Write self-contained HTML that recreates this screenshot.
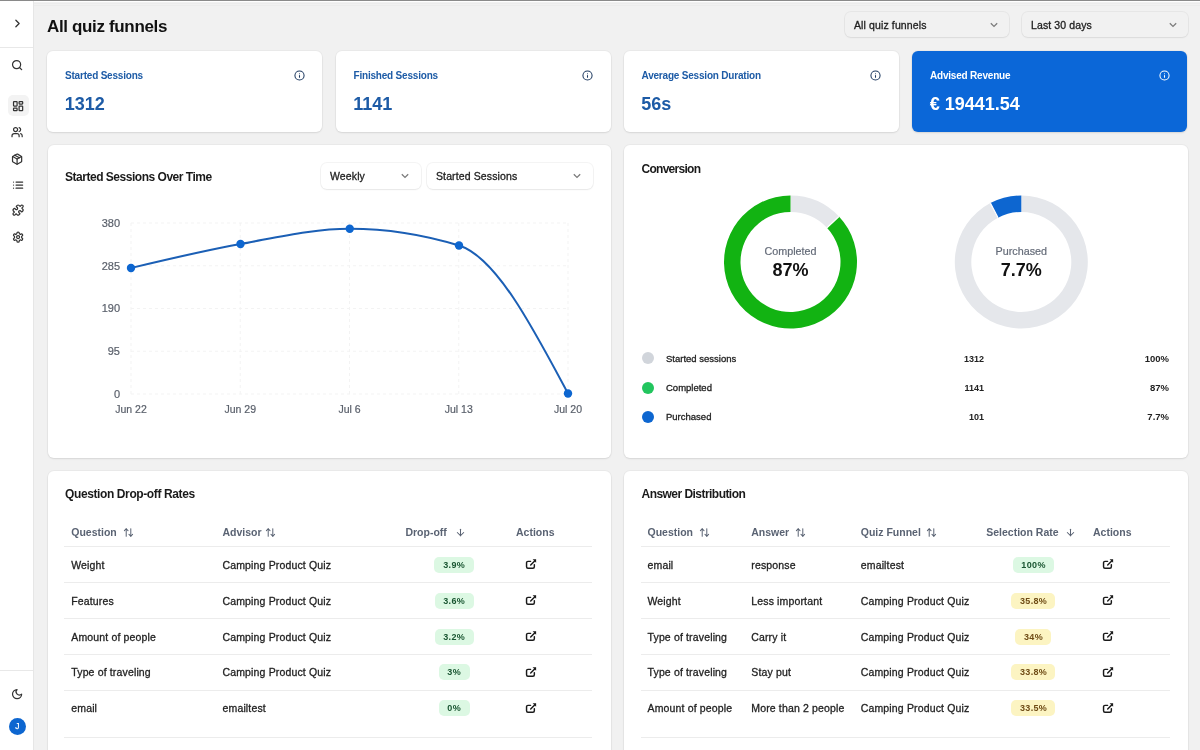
<!DOCTYPE html><html><head><meta charset="utf-8"><style>
*{box-sizing:border-box;margin:0;padding:0}
html,body{width:1200px;height:750px;overflow:hidden}
body{background:#f1f1f1;font-family:"Liberation Sans",sans-serif;color:#1a1a1a;position:relative}
.a{position:absolute;white-space:nowrap}
.card{position:absolute;background:#fff;border-radius:6px;box-shadow:0 1px 2px rgba(0,0,0,.09),0 0 0 1px rgba(0,0,0,.03)}
.md{-webkit-text-stroke:0.25px currentColor}
.ttl{font-size:12px;font-weight:bold;color:#1a1a1a;letter-spacing:-0.3px}
.sel{position:absolute;background:#fff;border-radius:6px;box-shadow:0 1px 2px rgba(0,0,0,.06),0 0 0 1px rgba(0,0,0,.045);font-size:10.5px;letter-spacing:0.12px;color:#222;-webkit-text-stroke:0.3px #222}
.sel span{position:absolute;left:9px;top:7px;white-space:nowrap}
.sel svg{position:absolute;right:11.5px;top:10px}
.ico{position:absolute;fill:none;stroke-linecap:round;stroke-linejoin:round}
.th{font-size:10.5px;font-weight:bold;color:#5a6373}
.td{font-size:10.5px;letter-spacing:0.15px;color:#1f1f1f;-webkit-text-stroke:0.3px #1f1f1f}
.bdg{position:absolute;height:16px;border-radius:5px;font-size:9px;font-weight:bold;text-align:center;line-height:16px;white-space:nowrap;letter-spacing:0.35px;text-indent:0.35px}
.g{background:#dcf8e3;color:#1a5632}
.y{background:#fcf4c2;color:#6f4c16}
.hl{position:absolute;height:1px;background:#ececec}
</style></head><body><div id="root" style="position:absolute;left:0;top:0;width:1200px;height:750px;will-change:transform">
<div class="a" style="left:0;top:0;width:1200px;height:1px;background:#8a8a8a"></div>
<div class="a" style="left:34px;top:1px;width:1166px;height:1px;background:#fff"></div>
<div class="a" style="left:34px;top:3px;width:1166px;height:1px;background:#ececec"></div>
<div class="a" style="left:34px;top:5px;width:1166px;height:1px;background:#ececec"></div>
<div class="a" style="left:0;top:1px;width:34px;height:749px;background:#fff;border-right:1px solid #e6e6e6"></div>
<div class="a" style="left:0;top:47px;width:33px;height:1px;background:#e8e8e8"></div>
<div class="a" style="left:0;top:670px;width:33px;height:1px;background:#e8e8e8"></div>
<div class="a" style="left:7.5px;top:95px;width:21px;height:21px;border-radius:5px;background:#f3f3f3"></div>
<svg class="ico" style="left:11.0px;top:16.7px" width="13" height="13" viewBox="0 0 24 24" stroke="#333" stroke-width="2.4"><path d="m9 18 6-6-6-6"/></svg>
<svg class="ico" style="left:10.700000000000001px;top:58.699999999999996px" width="12.2" height="12.2" viewBox="0 0 24 24" stroke="#333" stroke-width="2.4"><circle cx="11" cy="11" r="8"/><path d="m21 21-4.3-4.3"/></svg>
<svg class="ico" style="left:11.500000000000002px;top:99.7px" width="12.2" height="12.2" viewBox="0 0 24 24" stroke="#333" stroke-width="2.4"><rect width="7" height="9" x="3" y="3" rx="1"/><rect width="7" height="5" x="14" y="3" rx="1"/><rect width="7" height="9" x="14" y="12" rx="1"/><rect width="7" height="5" x="3" y="16" rx="1"/></svg>
<svg class="ico" style="left:11.4px;top:125.9px" width="12.2" height="12.2" viewBox="0 0 24 24" stroke="#333" stroke-width="2.4"><path d="M16 21v-2a4 4 0 0 0-4-4H6a4 4 0 0 0-4 4v2"/><circle cx="9" cy="7" r="4"/><path d="M22 21v-2a4 4 0 0 0-3-3.87"/><path d="M16 3.13a4 4 0 0 1 0 7.75"/></svg>
<svg class="ico" style="left:11.299999999999999px;top:152.5px" width="12.2" height="12.2" viewBox="0 0 24 24" stroke="#333" stroke-width="2.4"><path d="m7.5 4.27 9 5.15"/><path d="M21 8a2 2 0 0 0-1-1.73l-7-4a2 2 0 0 0-2 0l-7 4A2 2 0 0 0 3 8v8a2 2 0 0 0 1 1.730l7 4a2 2 0 0 0 2 0l7-4A2 2 0 0 0 21 16Z"/><path d="m3.3 7 8.7 5 8.7-5"/><path d="M12 22V12"/></svg>
<svg class="ico" style="left:11.9px;top:178.70000000000002px" width="12.2" height="12.2" viewBox="0 0 24 24" stroke="#333" stroke-width="2.4"><path d="M8 6h13M8 12h13M8 18h13M3 6h.01M3 12h.01M3 18h.01"/></svg>
<svg class="ico" style="left:11.500000000000002px;top:204.4px" width="12.2" height="12.2" viewBox="0 0 24 24" stroke="#333" stroke-width="2.4"><path d="M19.439 7.85c-.049.322.059.648.289.878l1.568 1.568c.47.47.706 1.087.706 1.704s-.235 1.233-.706 1.704l-1.611 1.611a.98.98 0 0 1-.837.276c-.47-.07-.802-.48-.968-.925a2.501 2.501 0 1 0-3.214 3.214c.446.166.855.497.925.968a.979.979 0 0 1-.276.837l-1.61 1.61a2.404 2.404 0 0 1-1.705.707 2.402 2.402 0 0 1-1.704-.706l-1.568-1.568a1.026 1.026 0 0 0-.877-.29c-.493.074-.84.504-1.02.968a2.5 2.5 0 1 1-3.237-3.237c.464-.18.894-.527.967-1.020a1.026 1.026 0 0 0-.289-.877l-1.568-1.568A2.402 2.402 0 0 1 1.998 12c0-.617.236-1.234.706-1.704L4.23 8.77c.24-.24.581-.353.917-.303.515.077.877.528 1.073 1.01a2.5 2.5 0 1 0 3.259-3.259c-.482-.196-.933-.558-1.010-1.073-.05-.336.062-.676.303-.917l1.525-1.525A2.402 2.402 0 0 1 12 1.998c.617 0 1.234.236 1.704.706l1.568 1.568c.23.23.556.338.877.29.493-.074.84-.504 1.020-.968a2.5 2.5 0 1 1 3.237 3.237c-.464.18-.894.527-.967 1.020Z"/></svg>
<svg class="ico" style="left:11.500000000000002px;top:230.9px" width="12.2" height="12.2" viewBox="0 0 24 24" stroke="#333" stroke-width="2.4"><path d="M12.22 2h-.44a2 2 0 0 0-2 2v.18a2 2 0 0 1-1 1.73l-.43.25a2 2 0 0 1-2 0l-.15-.08a2 2 0 0 0-2.73.73l-.22.38a2 2 0 0 0 .73 2.73l.15.1a2 2 0 0 1 1 1.72v.51a2 2 0 0 1-1 1.74l-.15.09a2 2 0 0 0-.73 2.73l.22.38a2 2 0 0 0 2.73.73l.15-.08a2 2 0 0 1 2 0l.43.25a2 2 0 0 1 1 1.73V20a2 2 0 0 0 2 2h.44a2 2 0 0 0 2-2v-.18a2 2 0 0 1 1-1.73l.43-.25a2 2 0 0 1 2 0l.15.08a2 2 0 0 0 2.730-.73l.22-.39a2 2 0 0 0-.73-2.73l-.15-.08a2 2 0 0 1-1-1.740v-.5a2 2 0 0 1 1-1.74l.15-.09a2 2 0 0 0 .73-2.73l-.22-.38a2 2 0 0 0-2.73-.73l-.15.08a2 2 0 0 1-2 0l-.43-.25a2 2 0 0 1-1-1.73V4a2 2 0 0 0-2-2z"/><circle cx="12" cy="12" r="3"/></svg>
<svg class="ico" style="left:11.1px;top:688.4px" width="12.2" height="12.2" viewBox="0 0 24 24" stroke="#333" stroke-width="2.4"><path d="M12 3a6 6 0 0 0 9 9 9 9 0 1 1-9-9Z"/></svg>
<div class="a" style="left:8.6px;top:717.5px;width:17.4px;height:17.4px;border-radius:50%;background:#0d66d0;color:#fff;font-size:8.5px;-webkit-text-stroke:0.25px #fff;text-align:center;line-height:17.4px">J</div>
<div class="a" style="left:47px;top:16.5px;font-size:17px;font-weight:bold;color:#111;letter-spacing:-0.35px">All quiz funnels</div>
<div class="sel" style="left:845px;top:12px;width:164px;height:25px;background:#f1f1f1"><span>All quiz funnels</span><svg width="8" height="6" viewBox="0 0 8 6"><path d="M0.8 1.2l3.2 3.2 3.2-3.2" fill="none" stroke="#7c7c7c" stroke-width="1.3"/></svg></div>
<div class="sel" style="left:1022px;top:12px;width:166px;height:25px;background:#f1f1f1"><span>Last 30 days</span><svg width="8" height="6" viewBox="0 0 8 6"><path d="M0.8 1.2l3.2 3.2 3.2-3.2" fill="none" stroke="#7c7c7c" stroke-width="1.3"/></svg></div>
<div class="card" style="left:47px;top:50.7px;width:275.3px;height:81.8px;background:#fff"><div class="a" style="left:18px;top:19.5px;font-size:10px;font-weight:bold;letter-spacing:-0.2px;color:#1d5ba6">Started Sessions</div><div class="a" style="left:17.7px;top:43.5px;font-size:18px;font-weight:bold;color:#1d5ba6">1312</div></div>
<svg class="ico" style="left:293.8px;top:69.8px" width="11" height="11" viewBox="0 0 24 24" stroke="#1e3a60" stroke-width="2.3"><circle cx="12" cy="12" r="10"/><path d="M12 16v-4M12 8h.01"/></svg>
<div class="card" style="left:335.5px;top:50.7px;width:275.3px;height:81.8px;background:#fff"><div class="a" style="left:18px;top:19.5px;font-size:10px;font-weight:bold;letter-spacing:-0.2px;color:#1d5ba6">Finished Sessions</div><div class="a" style="left:17.7px;top:43.5px;font-size:18px;font-weight:bold;color:#1d5ba6">1141</div></div>
<svg class="ico" style="left:582.3px;top:69.8px" width="11" height="11" viewBox="0 0 24 24" stroke="#1e3a60" stroke-width="2.3"><circle cx="12" cy="12" r="10"/><path d="M12 16v-4M12 8h.01"/></svg>
<div class="card" style="left:623.5px;top:50.7px;width:275.3px;height:81.8px;background:#fff"><div class="a" style="left:18px;top:19.5px;font-size:10px;font-weight:bold;letter-spacing:-0.2px;color:#1d5ba6">Average Session Duration</div><div class="a" style="left:17.7px;top:43.5px;font-size:18px;font-weight:bold;color:#1d5ba6">56s</div></div>
<svg class="ico" style="left:870.3px;top:69.8px" width="11" height="11" viewBox="0 0 24 24" stroke="#1e3a60" stroke-width="2.3"><circle cx="12" cy="12" r="10"/><path d="M12 16v-4M12 8h.01"/></svg>
<div class="card" style="left:912px;top:50.7px;width:275.3px;height:81.8px;background:#0b67d8"><div class="a" style="left:18px;top:19.5px;font-size:10px;font-weight:bold;letter-spacing:-0.2px;color:#fff">Advised Revenue</div><div class="a" style="left:17.7px;top:43.5px;font-size:18px;font-weight:bold;color:#fff">€ 19441.54</div></div>
<svg class="ico" style="left:1158.8px;top:69.8px" width="11" height="11" viewBox="0 0 24 24" stroke="#fff" stroke-width="2.3"><circle cx="12" cy="12" r="10"/><path d="M12 16v-4M12 8h.01"/></svg>
<div class="card" style="left:47.5px;top:145px;width:563.5px;height:312.5px"></div>
<div class="a" style="left:65px;top:169.5px;letter-spacing:-0.48px;font-size:12px;font-weight:bold;color:#1a1a1a">Started Sessions Over Time</div>
<div class="sel" style="left:321px;top:163px;width:99.5px;height:26px"><span>Weekly</span><svg width="8" height="6" viewBox="0 0 8 6"><path d="M0.8 1.2l3.2 3.2 3.2-3.2" fill="none" stroke="#7c7c7c" stroke-width="1.3"/></svg></div>
<div class="sel" style="left:427px;top:163px;width:165.5px;height:26px"><span>Started Sessions</span><svg width="8" height="6" viewBox="0 0 8 6"><path d="M0.8 1.2l3.2 3.2 3.2-3.2" fill="none" stroke="#7c7c7c" stroke-width="1.3"/></svg></div>
<div class="card" style="left:623.5px;top:145px;width:564px;height:312.5px"></div>
<svg class="a" style="left:0;top:0" width="1200" height="750" viewBox="0 0 1200 750">
<line x1="131" x2="568" y1="223" y2="223" stroke="#f3f3f3" stroke-width="1" stroke-dasharray="3 3"/>
<line x1="131" x2="568" y1="265.75" y2="265.75" stroke="#f3f3f3" stroke-width="1" stroke-dasharray="3 3"/>
<line x1="131" x2="568" y1="308.5" y2="308.5" stroke="#f3f3f3" stroke-width="1" stroke-dasharray="3 3"/>
<line x1="131" x2="568" y1="351.25" y2="351.25" stroke="#f3f3f3" stroke-width="1" stroke-dasharray="3 3"/>
<line x1="131" x2="568" y1="394" y2="394" stroke="#f3f3f3" stroke-width="1" stroke-dasharray="3 3"/>
<line x1="131" x2="131" y1="223" y2="394" stroke="#f3f3f3" stroke-width="1" stroke-dasharray="3 3"/>
<line x1="240.25" x2="240.25" y1="223" y2="394" stroke="#f3f3f3" stroke-width="1" stroke-dasharray="3 3"/>
<line x1="349.5" x2="349.5" y1="223" y2="394" stroke="#f3f3f3" stroke-width="1" stroke-dasharray="3 3"/>
<line x1="458.75" x2="458.75" y1="223" y2="394" stroke="#f3f3f3" stroke-width="1" stroke-dasharray="3 3"/>
<line x1="568" x2="568" y1="223" y2="394" stroke="#f3f3f3" stroke-width="1" stroke-dasharray="3 3"/>
<text x="120" y="226.8" text-anchor="end" font-size="11" fill="#595f6a" stroke="#595f6a" stroke-width="0.2" font-family="Liberation Sans">380</text>
<text x="120" y="269.55" text-anchor="end" font-size="11" fill="#595f6a" stroke="#595f6a" stroke-width="0.2" font-family="Liberation Sans">285</text>
<text x="120" y="312.3" text-anchor="end" font-size="11" fill="#595f6a" stroke="#595f6a" stroke-width="0.2" font-family="Liberation Sans">190</text>
<text x="120" y="355.05" text-anchor="end" font-size="11" fill="#595f6a" stroke="#595f6a" stroke-width="0.2" font-family="Liberation Sans">95</text>
<text x="120" y="397.8" text-anchor="end" font-size="11" fill="#595f6a" stroke="#595f6a" stroke-width="0.2" font-family="Liberation Sans">0</text>
<text x="131" y="413" text-anchor="middle" font-size="10.5" fill="#595f6a" stroke="#595f6a" stroke-width="0.2" font-family="Liberation Sans">Jun 22</text>
<text x="240.25" y="413" text-anchor="middle" font-size="10.5" fill="#595f6a" stroke="#595f6a" stroke-width="0.2" font-family="Liberation Sans">Jun 29</text>
<text x="349.5" y="413" text-anchor="middle" font-size="10.5" fill="#595f6a" stroke="#595f6a" stroke-width="0.2" font-family="Liberation Sans">Jul 6</text>
<text x="458.75" y="413" text-anchor="middle" font-size="10.5" fill="#595f6a" stroke="#595f6a" stroke-width="0.2" font-family="Liberation Sans">Jul 13</text>
<text x="568" y="413" text-anchor="middle" font-size="10.5" fill="#595f6a" stroke="#595f6a" stroke-width="0.2" font-family="Liberation Sans">Jul 20</text>
<path d="M131.00,268.00 C167.50,259.28 204.00,250.55 240.50,244.00 C276.92,237.46 313.33,228.70 349.75,228.70 C386.17,228.70 422.58,234.30 459.00,245.50 C495.33,256.67 531.67,325.09 568.00,393.50" fill="none" stroke="#1b5fb5" stroke-width="2"/>
<circle cx="131" cy="268" r="4.2" fill="#0d66d0"/>
<circle cx="240.5" cy="244" r="4.2" fill="#0d66d0"/>
<circle cx="349.75" cy="228.7" r="4.2" fill="#0d66d0"/>
<circle cx="459" cy="245.5" r="4.2" fill="#0d66d0"/>
<circle cx="568" cy="393.5" r="4.2" fill="#0d66d0"/>
<path d="M790.50,195.50 A66.5,66.5 0 0 1 838.98,216.48 L826.95,227.77 A50,50 0 0 0 790.50,212.00Z" fill="#e5e7eb"/>
<path d="M838.98,216.48 A66.5,66.5 0 1 1 790.50,195.50 L790.50,212.00 A50,50 0 1 0 826.95,227.77Z" fill="#12b312"/>
<line x1="826.95" y1="227.77" x2="838.98" y2="216.48" stroke="#fff" stroke-width="1.2"/>
<path d="M1021.30,195.50 A66.5,66.5 0 1 1 990.39,203.12 L998.06,217.73 A50,50 0 1 0 1021.30,212.00Z" fill="#e5e7eb"/>
<path d="M990.39,203.12 A66.5,66.5 0 0 1 1021.30,195.50 L1021.30,212.00 A50,50 0 0 0 998.06,217.73Z" fill="#0d66d0"/>
<line x1="998.06" y1="217.73" x2="990.39" y2="203.12" stroke="#fff" stroke-width="1.2"/>
</svg>
<div class="a" style="left:641.5px;top:162px;letter-spacing:-0.72px;font-size:12px;font-weight:bold;color:#1a1a1a">Conversion</div>
<div class="a" style="left:740.5px;top:244.5px;width:100px;text-align:center;font-size:10.75px;color:#646b78;-webkit-text-stroke:0.2px #646b78">Completed</div>
<div class="a" style="left:740.5px;top:260px;width:100px;text-align:center;font-size:18px;font-weight:bold;color:#111">87%</div>
<div class="a" style="left:971.3px;top:244.5px;width:100px;text-align:center;font-size:10.75px;color:#646b78;-webkit-text-stroke:0.2px #646b78">Purchased</div>
<div class="a" style="left:971.3px;top:260px;width:100px;text-align:center;font-size:18px;font-weight:bold;color:#111">7.7%</div>
<div class="a" style="left:642.25px;top:352.25px;width:12px;height:12px;border-radius:50%;background:#d1d5db"></div>
<div class="a" style="left:666px;top:352.55px;font-size:9.5px;color:#222;-webkit-text-stroke:0.3px #222;line-height:12px">Started sessions</div>
<div class="a" style="left:884px;top:352.85px;width:100px;text-align:right;font-size:9px;font-weight:bold;color:#222;line-height:12px">1312</div>
<div class="a" style="left:1069px;top:352.85px;width:100px;text-align:right;font-size:9.5px;font-weight:bold;color:#222;line-height:12px">100%</div>
<div class="a" style="left:642.25px;top:381.5px;width:12px;height:12px;border-radius:50%;background:#22c55e"></div>
<div class="a" style="left:666px;top:381.8px;font-size:9.5px;color:#222;-webkit-text-stroke:0.3px #222;line-height:12px">Completed</div>
<div class="a" style="left:884px;top:382.1px;width:100px;text-align:right;font-size:9px;font-weight:bold;color:#222;line-height:12px">1141</div>
<div class="a" style="left:1069px;top:382.1px;width:100px;text-align:right;font-size:9.5px;font-weight:bold;color:#222;line-height:12px">87%</div>
<div class="a" style="left:642.25px;top:410.75px;width:12px;height:12px;border-radius:50%;background:#0d66d0"></div>
<div class="a" style="left:666px;top:411.05px;font-size:9.5px;color:#222;-webkit-text-stroke:0.3px #222;line-height:12px">Purchased</div>
<div class="a" style="left:884px;top:411.35px;width:100px;text-align:right;font-size:9px;font-weight:bold;color:#222;line-height:12px">101</div>
<div class="a" style="left:1069px;top:411.35px;width:100px;text-align:right;font-size:9.5px;font-weight:bold;color:#222;line-height:12px">7.7%</div>
<div class="card" style="left:47.5px;top:470.5px;width:563.5px;height:300px"></div>
<div class="card" style="left:623.5px;top:470.5px;width:564px;height:300px"></div>
<div class="a" style="left:65px;top:487px;letter-spacing:-0.39px;font-size:12px;font-weight:bold;color:#1a1a1a">Question Drop-off Rates</div>
<div class="a" style="left:641.5px;top:487px;letter-spacing:-0.54px;font-size:12px;font-weight:bold;color:#1a1a1a">Answer Distribution</div>
<div class="hl" style="left:64.25px;top:546.0px;width:528px"></div>
<div class="hl" style="left:640.75px;top:546.0px;width:529px"></div>
<div class="hl" style="left:64.25px;top:582.0px;width:528px"></div>
<div class="hl" style="left:640.75px;top:582.0px;width:529px"></div>
<div class="hl" style="left:64.25px;top:617.75px;width:528px"></div>
<div class="hl" style="left:640.75px;top:617.75px;width:529px"></div>
<div class="hl" style="left:64.25px;top:654.0px;width:528px"></div>
<div class="hl" style="left:640.75px;top:654.0px;width:529px"></div>
<div class="hl" style="left:64.25px;top:689.5px;width:528px"></div>
<div class="hl" style="left:640.75px;top:689.5px;width:529px"></div>
<div class="hl" style="left:64.25px;top:737.0px;width:528px"></div>
<div class="hl" style="left:640.75px;top:737.0px;width:529px"></div>
<div class="a th" style="left:71.25px;top:525.5px;line-height:12px">Question</div>
<svg class="ico" style="left:122.5px;top:526.5px" width="11" height="11" viewBox="0 0 24 24" stroke="#5a6373" stroke-width="2.2"><path d="m21 16-4 4-4-4"/><path d="M17 20V4"/><path d="m3 8 4-4 4 4"/><path d="M7 4v16"/></svg>
<div class="a th" style="left:222.5px;top:525.5px;line-height:12px">Advisor</div>
<svg class="ico" style="left:264.5px;top:526.5px" width="11" height="11" viewBox="0 0 24 24" stroke="#5a6373" stroke-width="2.2"><path d="m21 16-4 4-4-4"/><path d="M17 20V4"/><path d="m3 8 4-4 4 4"/><path d="M7 4v16"/></svg>
<div class="a th" style="left:405.4px;top:525.5px;line-height:12px">Drop-off</div>
<svg class="ico" style="left:454.5px;top:526.5px" width="11" height="11" viewBox="0 0 24 24" stroke="#5a6373" stroke-width="2.2"><path d="M12 5v14"/><path d="m19 12-7 7-7-7"/></svg>
<div class="a th" style="left:516px;top:525.5px;line-height:12px">Actions</div>
<div class="a td" style="left:71.25px;top:558.8px;line-height:12px">Weight</div>
<div class="a td" style="left:222.5px;top:558.8px;line-height:12px">Camping Product Quiz</div>
<div class="bdg g" style="left:434.0px;top:556.8px;width:40px">3.9%</div>
<svg class="ico" style="left:524.5px;top:558.4px" width="12" height="12" viewBox="0 0 12 12" stroke="#1a1a1a" stroke-width="1.45"><path d="M5.6 3.35H3a1.45 1.45 0 0 0-1.45 1.45v4a1.45 1.45 0 0 0 1.45 1.45h4.9a1.45 1.45 0 0 0 1.45-1.45V6.6" fill="none"/><path d="M5.7 6.9L10.2 2.4"/><path d="M7.6 1.2H11.1V4.7Z" fill="#1a1a1a" stroke="none"/></svg>
<div class="a td" style="left:71.25px;top:594.5px;line-height:12px">Features</div>
<div class="a td" style="left:222.5px;top:594.5px;line-height:12px">Camping Product Quiz</div>
<div class="bdg g" style="left:434.5px;top:592.5px;width:39px">3.6%</div>
<svg class="ico" style="left:524.5px;top:594.1px" width="12" height="12" viewBox="0 0 12 12" stroke="#1a1a1a" stroke-width="1.45"><path d="M5.6 3.35H3a1.45 1.45 0 0 0-1.45 1.45v4a1.45 1.45 0 0 0 1.45 1.45h4.9a1.45 1.45 0 0 0 1.45-1.45V6.6" fill="none"/><path d="M5.7 6.9L10.2 2.4"/><path d="M7.6 1.2H11.1V4.7Z" fill="#1a1a1a" stroke="none"/></svg>
<div class="a td" style="left:71.25px;top:630.5px;line-height:12px">Amount of people</div>
<div class="a td" style="left:222.5px;top:630.5px;line-height:12px">Camping Product Quiz</div>
<div class="bdg g" style="left:434.5px;top:628.5px;width:39px">3.2%</div>
<svg class="ico" style="left:524.5px;top:630.1px" width="12" height="12" viewBox="0 0 12 12" stroke="#1a1a1a" stroke-width="1.45"><path d="M5.6 3.35H3a1.45 1.45 0 0 0-1.45 1.45v4a1.45 1.45 0 0 0 1.45 1.45h4.9a1.45 1.45 0 0 0 1.45-1.45V6.6" fill="none"/><path d="M5.7 6.9L10.2 2.4"/><path d="M7.6 1.2H11.1V4.7Z" fill="#1a1a1a" stroke="none"/></svg>
<div class="a td" style="left:71.25px;top:666.2px;line-height:12px">Type of traveling</div>
<div class="a td" style="left:222.5px;top:666.2px;line-height:12px">Camping Product Quiz</div>
<div class="bdg g" style="left:438.5px;top:664.2px;width:31px">3%</div>
<svg class="ico" style="left:524.5px;top:665.8000000000001px" width="12" height="12" viewBox="0 0 12 12" stroke="#1a1a1a" stroke-width="1.45"><path d="M5.6 3.35H3a1.45 1.45 0 0 0-1.45 1.45v4a1.45 1.45 0 0 0 1.45 1.45h4.9a1.45 1.45 0 0 0 1.45-1.45V6.6" fill="none"/><path d="M5.7 6.9L10.2 2.4"/><path d="M7.6 1.2H11.1V4.7Z" fill="#1a1a1a" stroke="none"/></svg>
<div class="a td" style="left:71.25px;top:702px;line-height:12px">email</div>
<div class="a td" style="left:222.5px;top:702px;line-height:12px">emailtest</div>
<div class="bdg g" style="left:438.5px;top:700px;width:31px">0%</div>
<svg class="ico" style="left:524.5px;top:701.6px" width="12" height="12" viewBox="0 0 12 12" stroke="#1a1a1a" stroke-width="1.45"><path d="M5.6 3.35H3a1.45 1.45 0 0 0-1.45 1.45v4a1.45 1.45 0 0 0 1.45 1.45h4.9a1.45 1.45 0 0 0 1.45-1.45V6.6" fill="none"/><path d="M5.7 6.9L10.2 2.4"/><path d="M7.6 1.2H11.1V4.7Z" fill="#1a1a1a" stroke="none"/></svg>
<div class="a th" style="left:647.5px;top:525.5px;line-height:12px">Question</div>
<svg class="ico" style="left:698.5px;top:526.5px" width="11" height="11" viewBox="0 0 24 24" stroke="#5a6373" stroke-width="2.2"><path d="m21 16-4 4-4-4"/><path d="M17 20V4"/><path d="m3 8 4-4 4 4"/><path d="M7 4v16"/></svg>
<div class="a th" style="left:751.25px;top:525.5px;line-height:12px">Answer</div>
<svg class="ico" style="left:794.5px;top:526.5px" width="11" height="11" viewBox="0 0 24 24" stroke="#5a6373" stroke-width="2.2"><path d="m21 16-4 4-4-4"/><path d="M17 20V4"/><path d="m3 8 4-4 4 4"/><path d="M7 4v16"/></svg>
<div class="a th" style="left:860.75px;top:525.5px;line-height:12px">Quiz Funnel</div>
<svg class="ico" style="left:925.5px;top:526.5px" width="11" height="11" viewBox="0 0 24 24" stroke="#5a6373" stroke-width="2.2"><path d="m21 16-4 4-4-4"/><path d="M17 20V4"/><path d="m3 8 4-4 4 4"/><path d="M7 4v16"/></svg>
<div class="a th" style="left:986.25px;top:525.5px;line-height:12px">Selection Rate</div>
<svg class="ico" style="left:1064.5px;top:526.5px" width="11" height="11" viewBox="0 0 24 24" stroke="#5a6373" stroke-width="2.2"><path d="M12 5v14"/><path d="m19 12-7 7-7-7"/></svg>
<div class="a th" style="left:1093px;top:525.5px;line-height:12px">Actions</div>
<div class="a td" style="left:647.5px;top:558.8px;line-height:12px">email</div>
<div class="a td" style="left:751.25px;top:558.8px;line-height:12px">response</div>
<div class="a td" style="left:860.75px;top:558.8px;line-height:12px">emailtest</div>
<div class="bdg g" style="left:1012.9000000000001px;top:556.8px;width:41px">100%</div>
<svg class="ico" style="left:1101.5px;top:558.4px" width="12" height="12" viewBox="0 0 12 12" stroke="#1a1a1a" stroke-width="1.45"><path d="M5.6 3.35H3a1.45 1.45 0 0 0-1.45 1.45v4a1.45 1.45 0 0 0 1.45 1.45h4.9a1.45 1.45 0 0 0 1.45-1.45V6.6" fill="none"/><path d="M5.7 6.9L10.2 2.4"/><path d="M7.6 1.2H11.1V4.7Z" fill="#1a1a1a" stroke="none"/></svg>
<div class="a td" style="left:647.5px;top:594.5px;line-height:12px">Weight</div>
<div class="a td" style="left:751.25px;top:594.5px;line-height:12px">Less important</div>
<div class="a td" style="left:860.75px;top:594.5px;line-height:12px">Camping Product Quiz</div>
<div class="bdg y" style="left:1011.4000000000001px;top:592.5px;width:44px">35.8%</div>
<svg class="ico" style="left:1101.5px;top:594.1px" width="12" height="12" viewBox="0 0 12 12" stroke="#1a1a1a" stroke-width="1.45"><path d="M5.6 3.35H3a1.45 1.45 0 0 0-1.45 1.45v4a1.45 1.45 0 0 0 1.45 1.45h4.9a1.45 1.45 0 0 0 1.45-1.45V6.6" fill="none"/><path d="M5.7 6.9L10.2 2.4"/><path d="M7.6 1.2H11.1V4.7Z" fill="#1a1a1a" stroke="none"/></svg>
<div class="a td" style="left:647.5px;top:630.5px;line-height:12px">Type of traveling</div>
<div class="a td" style="left:751.25px;top:630.5px;line-height:12px">Carry it</div>
<div class="a td" style="left:860.75px;top:630.5px;line-height:12px">Camping Product Quiz</div>
<div class="bdg y" style="left:1015.4000000000001px;top:628.5px;width:36px">34%</div>
<svg class="ico" style="left:1101.5px;top:630.1px" width="12" height="12" viewBox="0 0 12 12" stroke="#1a1a1a" stroke-width="1.45"><path d="M5.6 3.35H3a1.45 1.45 0 0 0-1.45 1.45v4a1.45 1.45 0 0 0 1.45 1.45h4.9a1.45 1.45 0 0 0 1.45-1.45V6.6" fill="none"/><path d="M5.7 6.9L10.2 2.4"/><path d="M7.6 1.2H11.1V4.7Z" fill="#1a1a1a" stroke="none"/></svg>
<div class="a td" style="left:647.5px;top:666.2px;line-height:12px">Type of traveling</div>
<div class="a td" style="left:751.25px;top:666.2px;line-height:12px">Stay put</div>
<div class="a td" style="left:860.75px;top:666.2px;line-height:12px">Camping Product Quiz</div>
<div class="bdg y" style="left:1011.4000000000001px;top:664.2px;width:44px">33.8%</div>
<svg class="ico" style="left:1101.5px;top:665.8000000000001px" width="12" height="12" viewBox="0 0 12 12" stroke="#1a1a1a" stroke-width="1.45"><path d="M5.6 3.35H3a1.45 1.45 0 0 0-1.45 1.45v4a1.45 1.45 0 0 0 1.45 1.45h4.9a1.45 1.45 0 0 0 1.45-1.45V6.6" fill="none"/><path d="M5.7 6.9L10.2 2.4"/><path d="M7.6 1.2H11.1V4.7Z" fill="#1a1a1a" stroke="none"/></svg>
<div class="a td" style="left:647.5px;top:702px;line-height:12px">Amount of people</div>
<div class="a td" style="left:751.25px;top:702px;line-height:12px">More than 2 people</div>
<div class="a td" style="left:860.75px;top:702px;line-height:12px">Camping Product Quiz</div>
<div class="bdg y" style="left:1011.4000000000001px;top:700px;width:44px">33.5%</div>
<svg class="ico" style="left:1101.5px;top:701.6px" width="12" height="12" viewBox="0 0 12 12" stroke="#1a1a1a" stroke-width="1.45"><path d="M5.6 3.35H3a1.45 1.45 0 0 0-1.45 1.45v4a1.45 1.45 0 0 0 1.45 1.45h4.9a1.45 1.45 0 0 0 1.45-1.45V6.6" fill="none"/><path d="M5.7 6.9L10.2 2.4"/><path d="M7.6 1.2H11.1V4.7Z" fill="#1a1a1a" stroke="none"/></svg>
</div></body></html>
